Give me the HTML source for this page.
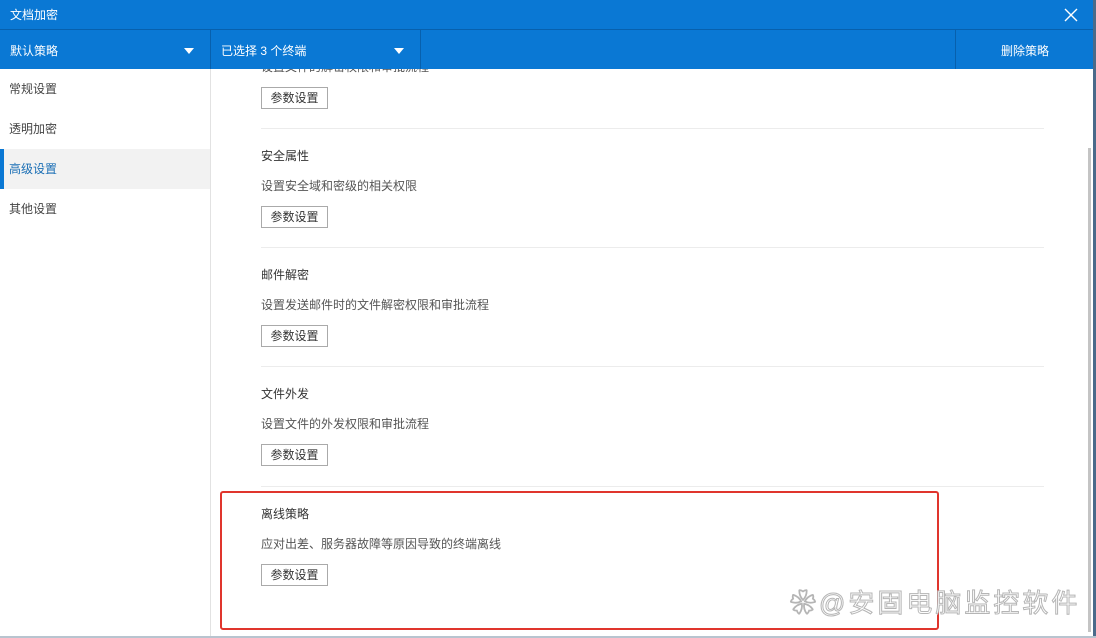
<!DOCTYPE html>
<html><head><meta charset="utf-8"><style>
*{margin:0;padding:0;box-sizing:border-box}
body{width:1096px;height:638px;position:relative;overflow:hidden;background:#fff;font-family:"Liberation Sans","Microsoft YaHei","Noto Sans CJK SC",sans-serif;font-size:12px;color:#333}
.a{position:absolute;white-space:nowrap}
.top{left:0;top:0;width:1096px;height:30px;background:#0a78d4;border-bottom:1px solid #0760ad}
.bar{left:0;top:30px;width:1096px;height:39px;background:#0a78d4}
.w{color:#fff;font-size:12px}
.tri{width:0;height:0;border-left:5px solid transparent;border-right:5px solid transparent;border-top:6px solid #fff}
.btn{width:67px;height:22px;border:1px solid #aaa;background:#fff;text-align:center;line-height:20px;font-size:12px;color:#333}
.ln{left:261px;width:783px;height:1px;background:#ececec}
.t{font-size:12px;color:#333}
.d{font-size:12px;color:#555}
</style></head><body>
<div class="a top"></div>
<div class="a w" style="left:10px;top:6px">文档加密</div>
<svg class="a" style="left:1064px;top:8px" width="14" height="14"><path d="M1 1L13 13M13 1L1 13" stroke="#fff" stroke-width="1.4"/></svg>
<div class="a bar"></div>
<div class="a" style="left:210px;top:30px;width:1px;height:39px;background:#0760ad"></div>
<div class="a" style="left:420px;top:30px;width:1px;height:39px;background:#0760ad"></div>
<div class="a" style="left:955px;top:30px;width:1px;height:39px;background:#0760ad"></div>
<div class="a w" style="left:10px;top:42px">默认策略</div>
<div class="a tri" style="left:184px;top:48px"></div>
<div class="a w" style="left:221px;top:42px">已选择 3 个终端</div>
<div class="a tri" style="left:394px;top:48px"></div>
<div class="a w" style="left:1001px;top:42px">删除策略</div>

<div class="a" style="left:210px;top:69px;width:1px;height:569px;background:#e2e2e2"></div>
<div class="a t" style="left:9px;top:80px;color:#444">常规设置</div>
<div class="a t" style="left:9px;top:120px;color:#444">透明加密</div>
<div class="a" style="left:0;top:149px;width:210px;height:40px;background:#f2f2f2"></div>
<div class="a" style="left:0;top:149px;width:4px;height:40px;background:#0a78d4"></div>
<div class="a t" style="left:9px;top:160px;color:#1b6fb5">高级设置</div>
<div class="a t" style="left:9px;top:200px;color:#444">其他设置</div>

<div class="a d" style="left:261px;top:58px;clip-path:inset(11px 0 0 0)">设置文件的解密权限和审批流程</div>
<div class="a btn" style="left:261px;top:87px">参数设置</div>
<div class="a ln" style="top:128px"></div>

<div class="a t" style="left:261px;top:147px">安全属性</div>
<div class="a d" style="left:261px;top:177px">设置安全域和密级的相关权限</div>
<div class="a btn" style="left:261px;top:206px">参数设置</div>
<div class="a ln" style="top:247px"></div>

<div class="a t" style="left:261px;top:266px">邮件解密</div>
<div class="a d" style="left:261px;top:296px">设置发送邮件时的文件解密权限和审批流程</div>
<div class="a btn" style="left:261px;top:325px">参数设置</div>
<div class="a ln" style="top:366px"></div>

<div class="a t" style="left:261px;top:385px">文件外发</div>
<div class="a d" style="left:261px;top:415px">设置文件的外发权限和审批流程</div>
<div class="a btn" style="left:261px;top:444px">参数设置</div>
<div class="a ln" style="top:486px"></div>

<div class="a t" style="left:261px;top:505px">离线策略</div>
<div class="a d" style="left:261px;top:535px">应对出差、服务器故障等原因导致的终端离线</div>
<div class="a btn" style="left:261px;top:564px">参数设置</div>

<div class="a" style="left:220px;top:491px;width:719px;height:139px;border:2.5px solid #e0352d;border-radius:3px"></div>
<div class="a" style="left:790px;top:583px;font-size:26px;color:#fff;-webkit-text-stroke:1px #b5b5b5;letter-spacing:3px">❀@安固电脑监控软件</div>

<div class="a" style="left:1088px;top:148px;width:3px;height:484px;background:#c4c4c4"></div>
<div class="a" style="left:1093px;top:0;width:3px;height:638px;background:#4a6a8a"></div>
<div class="a" style="left:0;top:636px;width:1096px;height:2px;background:#b8c4cf"></div>
</body></html>
